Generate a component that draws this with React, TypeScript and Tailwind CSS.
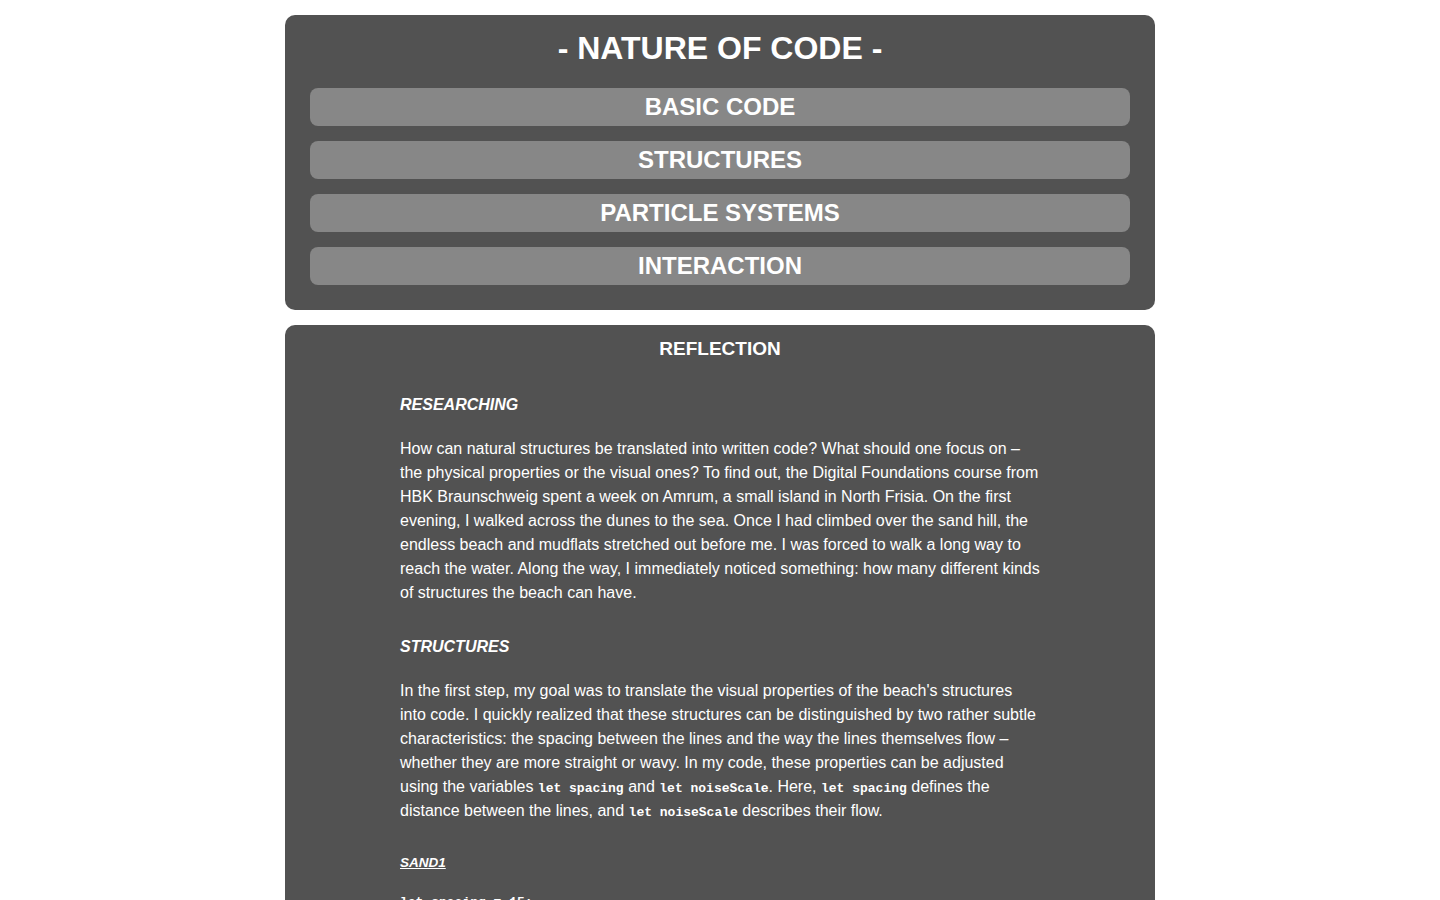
const sections = ['BASIC CODE', 'STRUCTURES', 'PARTICLE SYSTEMS', 'INTERACTION'];

function Code({ children }: { children: string }) {
  return (
    <code className="font-['Liberation_Mono',monospace] text-[13px] leading-none font-semibold">{children}</code>
  );
}

export default function App() {
  return (
    <div className="min-h-screen bg-white font-['Liberation_Sans',Arial,sans-serif] text-white">
      <div className="mx-auto flex w-[870px] flex-col gap-[15px] pt-[15px] pb-10">
        <header className="rounded-[10px] bg-[#525252] px-[25px] pt-[15px] pb-[25px]">
          <h1 className="text-center text-[32px] leading-[37px] font-bold">- NATURE OF CODE -</h1>
          <nav className="mt-[21px] flex flex-col gap-[15px]">
            {sections.map((s) => (
              <a
                key={s}
                href="#"
                className="flex h-[38px] items-center justify-center rounded-[8px] bg-[#878787] text-[24px] font-bold"
              >
                {s}
              </a>
            ))}
          </nav>
        </header>

        <main className="rounded-[10px] bg-[#525252] pt-[13px] pb-10">
          <h2 className="text-center text-[19px] leading-[22px] font-bold">REFLECTION</h2>
          <article className="mx-auto mt-[36px] w-[640px] text-[16px] leading-[24px]">
            <h3 className="text-[16px] leading-[18px] font-bold italic">RESEARCHING</h3>
            <p className="mt-[23px]">
              How can natural structures be translated into written code? What should one focus on – the physical
              properties or the visual ones? To find out, the Digital Foundations course from HBK Braunschweig spent a
              week on Amrum, a small island in North Frisia. On the first evening, I walked across the dunes to the
              sea. Once I had climbed over the sand hill, the endless beach and mudflats stretched out before me. I
              was forced to walk a long way to reach the water. Along the way, I immediately noticed something: how
              many different kinds of structures the beach can have.
            </p>

            <h3 className="mt-[33px] text-[16px] leading-[18px] font-bold italic">STRUCTURES</h3>
            <p className="mt-[23px]">
              In the first step, my goal was to translate the visual properties of the beach's structures into code.
              I quickly realized that these structures can be distinguished by two rather subtle characteristics: the
              spacing between the lines and the way the lines themselves flow – whether they are more straight or
              wavy. In my code, these properties can be adjusted using the variables <Code>let spacing</Code> and{' '}
              <Code>let noiseScale</Code>. Here, <Code>let spacing</Code> defines the distance between the lines, and{' '}
              <Code>let noiseScale</Code> describes their flow.
            </p>

            <h4 className="mt-[32px] text-[13.5px] leading-[16px] font-bold italic underline">SAND1</h4>
            <pre className="mt-[22px] font-['Liberation_Mono',monospace] text-[13px] leading-[20px] font-semibold">
{`let spacing = 15;
let noiseScale = 0.01;`}
            </pre>
          </article>
        </main>
      </div>
    </div>
  );
}
